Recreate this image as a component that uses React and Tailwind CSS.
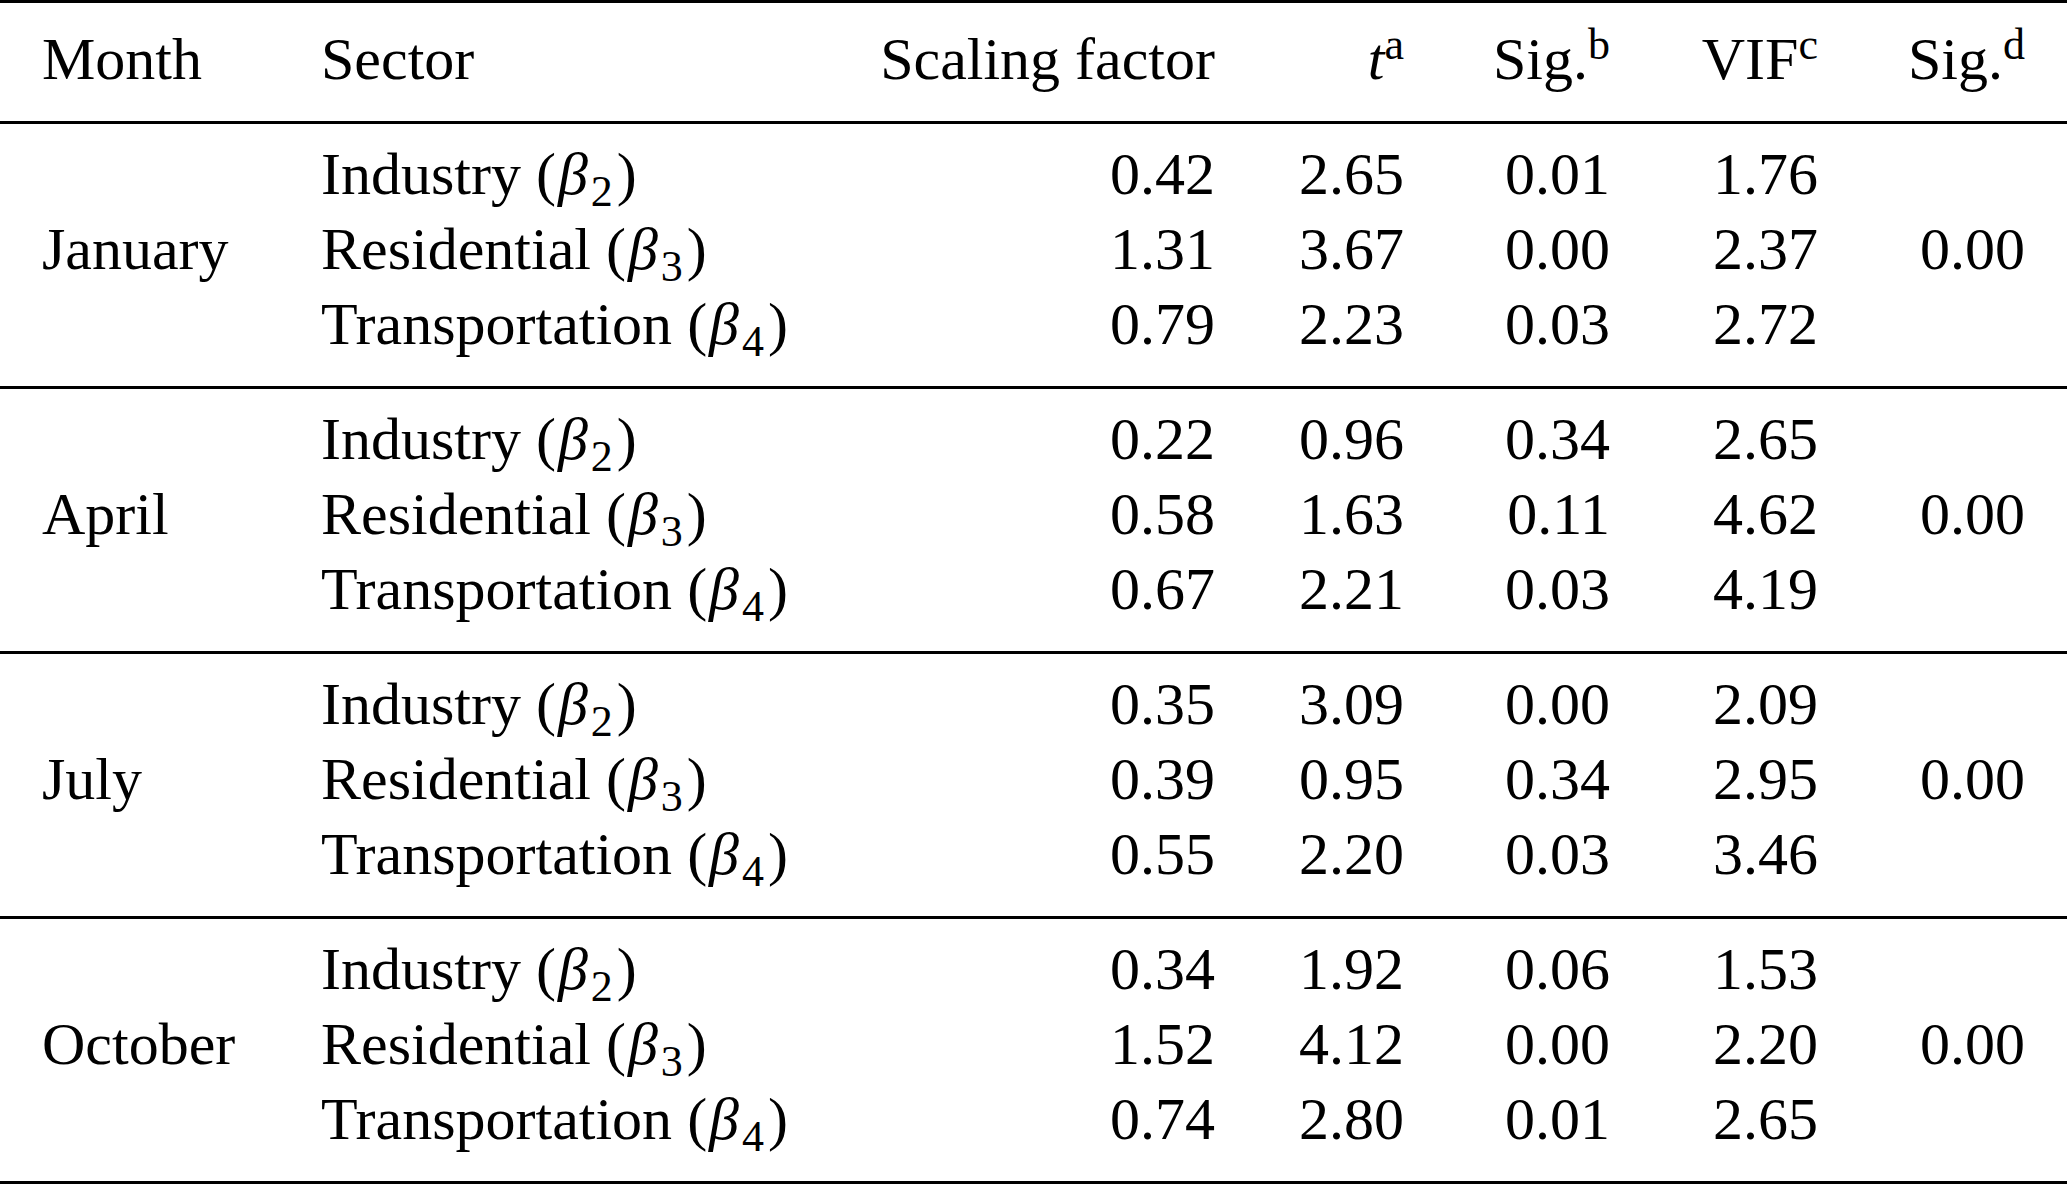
import React from 'react';

// --- DATA ---
const groups = [
  {
    month: 'January',
    sigF: '0.00',
    rows: [
      { sector: 'Industry', beta: 2, scale: '0.42', t: '2.65', sig: '0.01', vif: '1.76' },
      { sector: 'Residential', beta: 3, scale: '1.31', t: '3.67', sig: '0.00', vif: '2.37' },
      { sector: 'Transportation', beta: 4, scale: '0.79', t: '2.23', sig: '0.03', vif: '2.72' },
    ],
  },
  {
    month: 'April',
    sigF: '0.00',
    rows: [
      { sector: 'Industry', beta: 2, scale: '0.22', t: '0.96', sig: '0.34', vif: '2.65' },
      { sector: 'Residential', beta: 3, scale: '0.58', t: '1.63', sig: '0.11', vif: '4.62' },
      { sector: 'Transportation', beta: 4, scale: '0.67', t: '2.21', sig: '0.03', vif: '4.19' },
    ],
  },
  {
    month: 'July',
    sigF: '0.00',
    rows: [
      { sector: 'Industry', beta: 2, scale: '0.35', t: '3.09', sig: '0.00', vif: '2.09' },
      { sector: 'Residential', beta: 3, scale: '0.39', t: '0.95', sig: '0.34', vif: '2.95' },
      { sector: 'Transportation', beta: 4, scale: '0.55', t: '2.20', sig: '0.03', vif: '3.46' },
    ],
  },
  {
    month: 'October',
    sigF: '0.00',
    rows: [
      { sector: 'Industry', beta: 2, scale: '0.34', t: '1.92', sig: '0.06', vif: '1.53' },
      { sector: 'Residential', beta: 3, scale: '1.52', t: '4.12', sig: '0.00', vif: '2.20' },
      { sector: 'Transportation', beta: 4, scale: '0.74', t: '2.80', sig: '0.01', vif: '2.65' },
    ],
  },
];

const cols = 'grid grid-cols-[321px_559px_335px_189px_206px_208px_207px] pr-[42px]';

const Sup = ({ children }) => (
  <span className="relative -top-[20px] text-[44px] leading-none">{children}</span>
);

const Beta = ({ n }) => (
  <>
    (<span className="italic pl-[2px]">β</span>
    <span className="relative top-[12px] text-[44px] leading-none pl-[3px] pr-[4px]">{n}</span>)
  </>
);

const Group = ({ group }) => (
  <div className={`${cols} grid-rows-[repeat(3,75px)] pt-[13px] pb-[24px] border-b-[3px] border-black`}>
    <div className="col-start-1 row-start-1 row-span-3 self-center pl-[42px]">{group.month}</div>
    <div className="col-start-7 row-start-1 row-span-3 self-center text-right">{group.sigF}</div>
    {group.rows.map((r) => (
      <React.Fragment key={r.sector}>
        <div className="whitespace-nowrap">
          {r.sector} <Beta n={r.beta} />
        </div>
        <div className="text-right">{r.scale}</div>
        <div className="text-right">{r.t}</div>
        <div className="text-right">{r.sig}</div>
        <div className="text-right">{r.vif}</div>
      </React.Fragment>
    ))}
  </div>
);

export default function App() {
  return (
    <div className="w-[2067px] h-[1185px] bg-white text-black font-['Liberation_Serif',serif] text-[60px] leading-[75px] overflow-hidden">
      {/* Header */}
      <div className={`${cols} pt-[19px] pb-[24px] border-t-[3px] border-b-[3px] border-black`}>
        <div className="pl-[42px]">Month</div>
        <div>Sector</div>
        <div className="text-right whitespace-nowrap">Scaling factor</div>
        <div className="text-right">
          <span className="italic">t</span>
          <Sup>a</Sup>
        </div>
        <div className="text-right">
          Sig.<Sup>b</Sup>
        </div>
        <div className="text-right">
          VIF<Sup>c</Sup>
        </div>
        <div className="text-right">
          Sig.<Sup>d</Sup>
        </div>
      </div>

      {groups.map((g) => (
        <Group key={g.month} group={g} />
      ))}
    </div>
  );
}
